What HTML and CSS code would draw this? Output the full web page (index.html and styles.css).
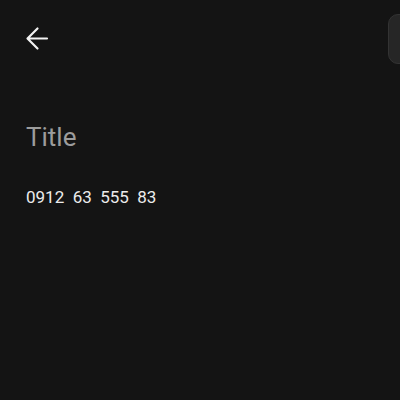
FILE: index.html
```html
<!DOCTYPE html>
<html>
<head>
<meta charset="utf-8">
<link rel="stylesheet" href="styles.css">
</head>
<body>
<div class="screen">
  <header class="topbar">
    <button class="back" aria-label="Back">
      <svg viewBox="0 0 32 32" width="32" height="32"><path d="M27 15.5H8 M17.5 5.5 L7.5 15.5 L17.5 25.5" fill="none" stroke="#f2f2f2" stroke-width="2.2" stroke-linecap="round" stroke-linejoin="round"/></svg>
    </button>
  </header>
  <h1 class="title">Title</h1>
  <p class="number">0912&nbsp;&nbsp;63&nbsp;&nbsp;555&nbsp;&nbsp;83</p>
  <div class="edge-tab"></div>
</div>
</body>
</html>
```
FILE: styles.css
```css
html, body {
  margin: 0;
  padding: 0;
  background: #141414;
}
.screen {
  position: relative;
  width: 400px;
  height: 400px;
  overflow: hidden;
  font-family: Roboto, "Noto Sans", sans-serif;
}
.topbar {
  display: flex;
  align-items: center;
  height: 78px;
  padding-left: 20px;
}
.back {
  background: none;
  border: none;
  padding: 0;
  width: 32px;
  height: 32px;
  display: flex;
}
.title {
  margin: 43px 0 0 26px;
  font-size: 26px;
  font-weight: 400;
  color: #9c9c9c;
  line-height: 32px;
}
.number {
  margin: 33px 0 0 26px;
  font-size: 17px;
  color: #ececec;
  line-height: 22px;
}
.edge-tab {
  position: absolute;
  right: -12px;
  top: 14px;
  width: 22px;
  height: 48px;
  border-radius: 10px;
  background: #262626;
  border: 1px solid #333;
}
```
